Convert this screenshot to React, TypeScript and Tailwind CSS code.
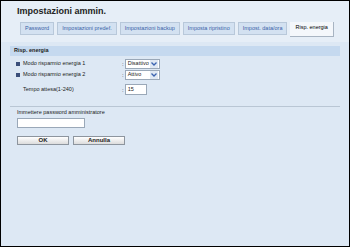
import React from "react";

const tabs = [
  "Password",
  "Impostazioni predef.",
  "Impostazioni backup",
  "Imposta ripristino",
  "Impost. data/ora",
];

function Select({ value }: { value: string }) {
  return (
    <div className="flex h-[10px] w-[35px] items-center justify-between border border-[#9aa8b8] bg-white pl-[2px]">
      <span className="text-[5.5px] leading-none text-[#222]">{value}</span>
      <span className="mr-[1px] flex h-[8px] w-[8px] items-center justify-center bg-[#dfe8f3]">
        <svg width="6" height="4" viewBox="0 0 6 4">
          <path d="M0.5 0.5 L3 3 L5.5 0.5" stroke="#3b63b0" strokeWidth="1.3" fill="none" />
        </svg>
      </span>
    </div>
  );
}

export default function App() {
  return (
    <div
      className="flex h-[247px] w-[350px] flex-col border border-black bg-[#dde8f4] text-[#222]"
      style={{ fontFamily: '"Liberation Sans", Arial, sans-serif' }}
    >
      <div className="bg-[#e6eef7] pb-[5px]">
        <div className="pl-[16px] pt-[4px] text-[9px] font-bold leading-[12px]">Impostazioni ammin.</div>
        <div className="mt-[5px] flex gap-[3px] pl-[19px]">
          {tabs.map((t) => (
            <div
              key={t}
              className="flex h-[13px] items-center border border-[#b8c8da] bg-[#d3e1f1] px-[4px] text-[5.5px] leading-none text-[#3a62a8]"
            >
              {t}
            </div>
          ))}
          <div className="flex h-[15px] items-center border-b border-r border-[#a8b4c2] bg-[#f4f7fb] px-[5px] pb-[2px] text-[5.5px] leading-none text-black">
            Risp. energia
          </div>
        </div>
      </div>
      <div className="mx-[9px] mt-[4px] flex h-[10px] items-center bg-[#c5d9ef] pl-[4px] text-[5.5px] font-bold leading-none">
        Risp. energia
      </div>
      <div className="mx-[9px] mt-[3px] flex flex-col gap-[1px] pl-[6px]">
        <div className="flex h-[10px] items-center">
          <span className="mr-[3px] h-[4px] w-[4px] bg-[#3b4f7a]" />
          <span className="w-[99px] text-[5.5px] leading-none">Modo risparmio energia 1</span>
          <span className="mr-[1px] text-[6px] leading-none">:</span>
          <Select value="Disattivo" />
        </div>
        <div className="flex h-[10px] items-center">
          <span className="mr-[3px] h-[4px] w-[4px] bg-[#3b4f7a]" />
          <span className="w-[99px] text-[5.5px] leading-none">Modo risparmio energia 2</span>
          <span className="mr-[1px] text-[6px] leading-none">:</span>
          <Select value="Attivo" />
        </div>
        <div className="mt-[3px] flex h-[11px] items-center">
          <span className="w-[106px] pl-[7px] text-[5.5px] leading-none">Tempo attesa(1-240)</span>
          <span className="mr-[1px] text-[6px] leading-none">:</span>
          <div className="flex h-[11px] w-[22px] items-center border border-[#9aa8b8] bg-white pl-[2px] text-[5.5px] leading-none">
            15
          </div>
        </div>
      </div>
      <div className="mx-[9px] mt-[11px] border-t border-[#b9c6d4]" />
      <div className="pl-[16px] pt-[3px] text-[5.5px] leading-none">Immettere password amministratore</div>
      <div className="ml-[16px] mt-[2px] h-[10px] w-[68px] border border-[#9aa8b8] bg-white" />
      <div className="ml-[16px] mt-[8px] flex gap-[4px]">
        <div className="flex h-[9px] w-[52px] items-center justify-center border border-[#8d959e] bg-gradient-to-b from-white to-[#dcdcdc] text-[6px] font-bold leading-none">
          OK
        </div>
        <div className="flex h-[9px] w-[52px] items-center justify-center border border-[#8d959e] bg-gradient-to-b from-white to-[#dcdcdc] text-[6px] font-bold leading-none">
          Annulla
        </div>
      </div>
    </div>
  );
}
